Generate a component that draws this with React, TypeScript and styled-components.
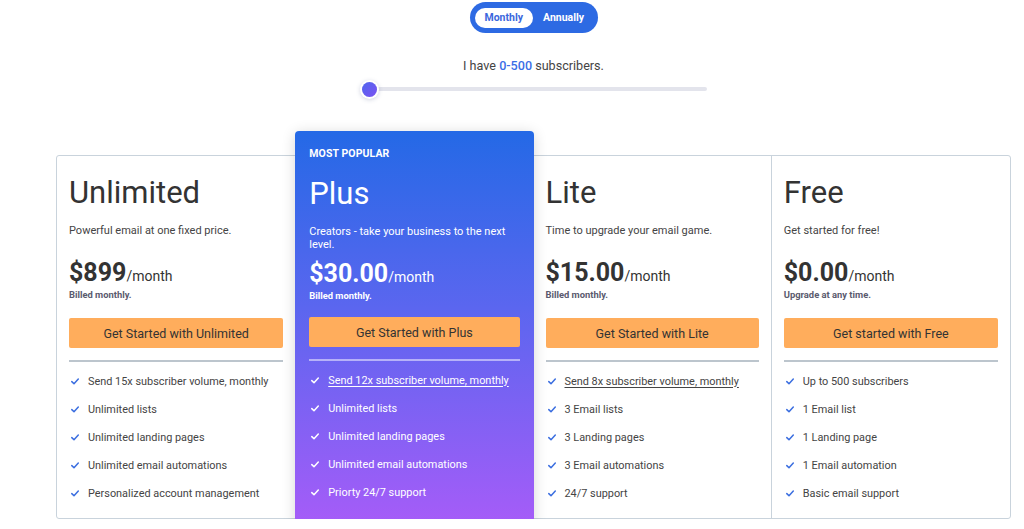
import React from "react";
import styled, { createGlobalStyle } from "styled-components";

const GlobalStyle = createGlobalStyle`
  html, body { margin: 0; padding: 0; background: #ffffff; }
  body { font-family: Roboto, "Noto Sans", "Liberation Sans", sans-serif; color: #333; }
  * { box-sizing: border-box; }
`;

const Page = styled.div`
  width: 1024px;
  padding: 2px 13px 0 56px;
`;

const Inner = styled.div`
  width: 955px;
  display: flex;
  flex-direction: column;
  align-items: center;
`;

const Toggle = styled.div`
  display: flex;
  align-items: center;
  width: 128px;
  height: 31px;
  padding: 0 5px;
  border-radius: 16px;
  background: #2d6ae3;
`;

const ToggleOption = styled.div<{ $active?: boolean }>`
  height: 20px;
  padding: 0 ${(p) => (p.$active ? "10px" : "10px")};
  border-radius: 10px;
  display: flex;
  align-items: center;
  font-size: 10.5px;
  font-weight: 700;
  background: ${(p) => (p.$active ? "#ffffff" : "transparent")};
  color: ${(p) => (p.$active ? "#3b67dd" : "#ffffff")};
`;

const SliderLabel = styled.div`
  margin-top: 26px;
  font-size: 12.6px;
  line-height: 14px;
  color: #444;
`;

const Range = styled.span`
  color: #3b6ee6;
  font-weight: 500;
`;

const Track = styled.div`
  margin-top: 14px;
  width: 346px;
  height: 4px;
  border-radius: 2px;
  background: #e3e4ec;
  position: relative;
`;

const Thumb = styled.div`
  position: absolute;
  left: 1px;
  top: 50%;
  width: 15px;
  height: 15px;
  margin-top: -7.5px;
  border-radius: 50%;
  background: linear-gradient(135deg, #4f66ee, #7b52f2);
  box-shadow: 0 0 0 2px #ffffff, 0 1px 4px 2px rgba(80, 90, 140, 0.25);
`;

const Plans = styled.div`
  margin-top: 64px;
  width: 955px;
  display: grid;
  grid-template-columns: repeat(4, 1fr);
  border: 1px solid #c9d3dc;
  border-radius: 3px;
`;

const Card = styled.div<{ $featured?: boolean; $divider?: boolean }>`
  position: relative;
  display: flex;
  flex-direction: column;
  padding: ${(p) => (p.$featured ? "18px 14px 18px" : "18px 12px 11px")};
  ${(p) => p.$divider && "border-right: 1px solid #c9d3dc;"}
  ${(p) =>
    p.$featured &&
    `
    margin: -25px 0 -7px;
    border-radius: 4px;
    background: linear-gradient(180deg, #2469e6 0%, #5b66ef 45%, #a65cf8 100%);
    color: #ffffff;
    z-index: 1;
    box-shadow: 0 2px 14px rgba(0, 0, 0, 0.16);
  `}
`;

const Badge = styled.div`
  font-size: 10.5px;
  line-height: 13px;
  font-weight: 700;
  margin: -2px 0 15px;
  letter-spacing: 0.1px;
`;

const Title = styled.h2<{ $featured?: boolean }>`
  margin: 0;
  font-size: 31px;
  line-height: 38px;
  font-weight: 400;
  color: ${(p) => (p.$featured ? "#ffffff" : "#333333")};
`;

const Description = styled.p<{ $featured?: boolean }>`
  margin: 12px 0 0;
  height: 36px;
  font-size: 11px;
  line-height: 13px;
  color: ${(p) => (p.$featured ? "#ffffff" : "#444444")};
`;

const Price = styled.div<{ $featured?: boolean }>`
  font-size: 25px;
  line-height: 26px;
  font-weight: 700;
  color: ${(p) => (p.$featured ? "#ffffff" : "#333333")};
`;

const Per = styled.span`
  font-size: 14px;
  font-weight: 400;
`;

const Billing = styled.div<{ $featured?: boolean }>`
  font-size: 9.4px;
  line-height: 11px;
  font-weight: 700;
  color: ${(p) => (p.$featured ? "#ffffff" : "#5a5a6e")};
`;

const CTA = styled.button<{ $featured?: boolean }>`
  margin-top: ${(p) => (p.$featured ? "16px" : "18px")};
  height: 30px;
  width: 100%;
  border: none;
  border-radius: 2px;
  background: #ffad5c;
  color: #333333;
  font-family: inherit;
  font-size: 12.5px;
  cursor: pointer;
  padding: 0;
`;

const Divider = styled.hr<{ $featured?: boolean }>`
  margin: 12px 0 5px;
  border: none;
  height: 2px;
  background: ${(p) => (p.$featured ? "rgba(255,255,255,0.5)" : "#bcc5cd")};
`;

const Features = styled.ul`
  list-style: none;
  margin: 0;
  padding: 0;
`;

const Feature = styled.li<{ $featured?: boolean }>`
  display: flex;
  align-items: center;
  gap: 9px;
  height: 28px;
  padding-left: 2px;
  font-size: 10.9px;
  color: ${(p) => (p.$featured ? "#ffffff" : "#444444")};
`;

const FeatureText = styled.span<{ $underline?: boolean }>`
  ${(p) => p.$underline && "text-decoration: underline; text-underline-offset: 2px;"}
`;

const Check = ({ color }: { color: string }) => (
  <svg width="8" height="7" viewBox="0 0 8 7" fill="none">
    <path d="M0.8 3.6 L3 5.8 L7.3 1" stroke={color} strokeWidth="1.5" strokeLinecap="round" strokeLinejoin="round" />
  </svg>
);

type Plan = {
  name: string;
  desc: string;
  price: string;
  billing: string;
  cta: string;
  features: string[];
  underlineFirst?: boolean;
  featured?: boolean;
  divider?: boolean;
};

const plans: Plan[] = [
  {
    name: "Unlimited",
    desc: "Powerful email at one fixed price.",
    price: "$899",
    billing: "Billed monthly.",
    cta: "Get Started with Unlimited",
    features: [
      "Send 15x subscriber volume, monthly",
      "Unlimited lists",
      "Unlimited landing pages",
      "Unlimited email automations",
      "Personalized account management",
    ],
  },
  {
    name: "Plus",
    desc: "Creators - take your business to the next level.",
    price: "$30.00",
    billing: "Billed monthly.",
    cta: "Get Started with Plus",
    featured: true,
    underlineFirst: true,
    features: [
      "Send 12x subscriber volume, monthly",
      "Unlimited lists",
      "Unlimited landing pages",
      "Unlimited email automations",
      "Priorty 24/7 support",
    ],
  },
  {
    name: "Lite",
    desc: "Time to upgrade your email game.",
    price: "$15.00",
    billing: "Billed monthly.",
    cta: "Get Started with Lite",
    underlineFirst: true,
    divider: true,
    features: [
      "Send 8x subscriber volume, monthly",
      "3 Email lists",
      "3 Landing pages",
      "3 Email automations",
      "24/7 support",
    ],
  },
  {
    name: "Free",
    desc: "Get started for free!",
    price: "$0.00",
    billing: "Upgrade at any time.",
    cta: "Get started with Free",
    features: [
      "Up to 500 subscribers",
      "1 Email list",
      "1 Landing page",
      "1 Email automation",
      "Basic email support",
    ],
  },
];

export default function App() {
  return (
    <>
      <GlobalStyle />
      <Page>
        <Inner>
          <Toggle>
            <ToggleOption $active>Monthly</ToggleOption>
            <ToggleOption>Annually</ToggleOption>
          </Toggle>
          <SliderLabel>
            I have <Range>0-500</Range> subscribers.
          </SliderLabel>
          <Track>
            <Thumb />
          </Track>
          <Plans>
            {plans.map((p) => (
              <Card key={p.name} $featured={p.featured} $divider={p.divider}>
                {p.featured && <Badge>MOST POPULAR</Badge>}
                <Title $featured={p.featured}>{p.name}</Title>
                <Description $featured={p.featured}>{p.desc}</Description>
                <Price $featured={p.featured}>
                  {p.price}
                  <Per>/month</Per>
                </Price>
                <Billing $featured={p.featured}>{p.billing}</Billing>
                <CTA $featured={p.featured}>{p.cta}</CTA>
                <Divider $featured={p.featured} />
                <Features>
                  {p.features.map((f, i) => (
                    <Feature key={f} $featured={p.featured}>
                      <Check color={p.featured ? "#ffffff" : "#3c6fe0"} />
                      <FeatureText $underline={p.underlineFirst && i === 0}>{f}</FeatureText>
                    </Feature>
                  ))}
                </Features>
              </Card>
            ))}
          </Plans>
        </Inner>
      </Page>
    </>
  );
}
